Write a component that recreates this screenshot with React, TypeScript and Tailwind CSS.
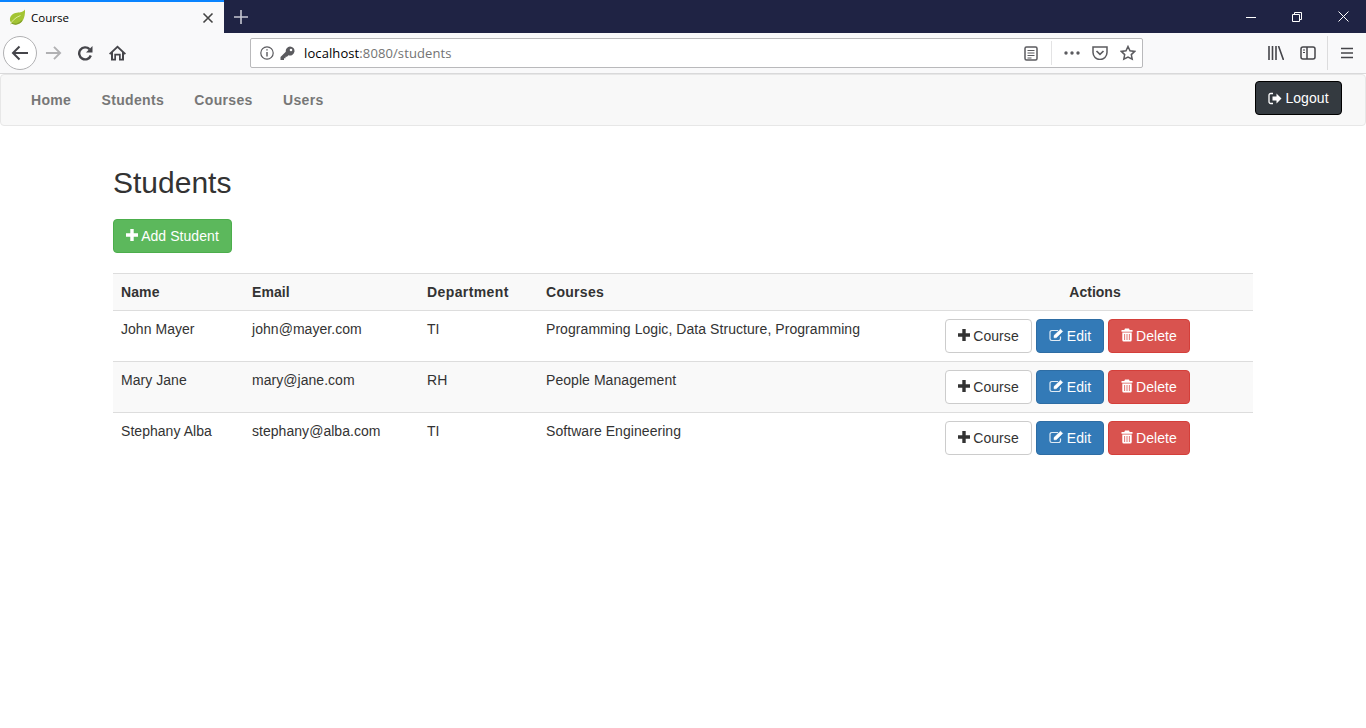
import React from "react";

const Plus = ({ c = "#333" }: { c?: string }) => (
  <svg width="12" height="12" viewBox="0 0 12 12" className="shrink-0 -translate-y-px" fill={c}>
    <path d="M4.300 0h3.400v4.300H12v3.400H7.700V12H4.300V7.700H0V4.300h4.300z" />
  </svg>
);
const EditI = () => (
  <svg width="15" height="14" viewBox="0 0 15 14" className="shrink-0 -translate-y-px" fill="none" stroke="#fff">
    <path d="M11.500 8.500v2.200a1.800 1.800 0 0 1-1.800 1.800H2.800A1.800 1.800 0 0 1 1 10.700V4.300a1.800 1.800 0 0 1 1.800-1.800H9" strokeWidth="1.200" opacity="0.85" />
    <path d="M5 9.800V7.600L11.500 1.200l2.200 2.200L7.200 9.800z" fill="#fff" strokeWidth="0.500" />
  </svg>
);
const Trash = () => (
  <svg width="12" height="14" viewBox="0 0 12 14" className="shrink-0 -translate-y-px" fill="#fff">
    <path d="M4 .5h4l.7 1.500h2.800v1.700H.5V2h2.800zM1.300 4.500h9.400V12a1.500 1.500 0 0 1-1.500 1.500H2.800A1.500 1.500 0 0 1 1.300 12zM3.300 6v6h.8V6zM5.600 6v6h.8V6zM7.900 6v6h.8V6z" fillRule="evenodd" />
  </svg>
);
const LogoutI = () => (
  <svg width="14" height="13" viewBox="0 0 14 13" className="shrink-0" fill="none">
    <path d="M5 1.500H2.800A1.800 1.800 0 0 0 1 3.300v6.400a1.800 1.800 0 0 0 1.800 1.800H5" stroke="#fff" strokeWidth="1.300" />
    <path d="M4.500 4.500h4V1.500l5 5-5 5v-3h-4z" fill="#fff" />
  </svg>
);

const base = "inline-flex items-center justify-center h-[34px] rounded border text-sm tracking-[0.06px]";

const Row = ({ name, email, dept, courses, odd }: { name: string; email: string; dept: string; courses: string; odd?: boolean }) => (
  <tr className={`border-t border-[#dddddd] ${odd ? "bg-[#f9f9f9]" : ""}`}>
    <td className="p-2 align-top leading-5 tracking-[0.04px]">{name}</td>
    <td className="p-2 align-top leading-5 tracking-[0.04px]">{email}</td>
    <td className="p-2 align-top leading-5 tracking-[0.04px]">{dept}</td>
    <td className="p-2 align-top leading-5 tracking-[0.06px]">{courses}</td>
    <td className="p-2 align-top leading-5">
      <div className="flex gap-1">
        <button className={`${base} gap-[3px] w-[87px] bg-white border-[#cccccc] text-[#333]`}><Plus />Course</button>
        <button className={`${base} gap-[3px] w-[68px] bg-[#337ab7] border-[#2e6da4] text-white`}><EditI />Edit</button>
        <button className={`${base} gap-[3px] w-[82px] bg-[#d9534f] border-[#d43f3a] text-white`}><Trash />Delete</button>
      </div>
    </td>
  </tr>
);

export default function App() {
  return (
    <div className="min-h-[728px] bg-white text-[#333] font-['Liberation_Sans',Arial,sans-serif] text-sm overflow-hidden">
      {/* tab strip */}
      <div className="h-[33px] bg-[#1f2344] flex items-stretch">
        <div className="w-[224px] bg-[#f9f9fa] border-t-2 border-[#0a84ff] flex items-center pl-[9px] pr-[10px]">
          <svg width="17" height="17" viewBox="0 0 17 17" className="shrink-0">
            <path d="M16 .5C16.500 9 13 15.500 7 15.500 4 15.500 1.500 14 1 11.500.5 7 3.500 4.500 8 3.800 11 3.300 14.500 3 16 .5z" fill="#a3c433" />
            <path d="M1.500 15.500C3 11.500 6.500 8.500 11.500 6.500" stroke="#dcea9c" strokeWidth="1" fill="none" />
            <path d="M2.500 14C5 15.500 10 16 13 11.500" stroke="#7f9c2a" strokeWidth="1.200" fill="none" />
          </svg>
          <span className="ml-[5px] text-[11.500px] text-black font-['Open_Sans',sans-serif] flex-1 pt-px">Course</span>
          <svg width="12" height="12" viewBox="0 0 12 12" stroke="#444" strokeWidth="1.600"><path d="M1.500 1.500l9 9M10.500 1.500l-9 9" /></svg>
        </div>
        <div className="w-[34px] flex items-center justify-center">
          <svg width="14" height="14" viewBox="0 0 14 14" stroke="#c6c8d2" strokeWidth="1.600"><path d="M7 0v14M0 7h14" /></svg>
        </div>
        <div className="flex-1" />
        <div className="flex items-center">
          <div className="w-[46px] flex justify-center"><svg width="10" height="10" viewBox="0 0 10 10" stroke="#fff"><path d="M0 5.500h10" /></svg></div>
          <div className="w-[46px] flex justify-center"><svg width="10" height="10" viewBox="0 0 10 10" fill="none" stroke="#fff"><path d="M.5 2.500h7v7h-7zM2.500 2.500v-2h7v7h-2" /></svg></div>
          <div className="w-[46px] flex justify-center"><svg width="11" height="11" viewBox="0 0 11 11" stroke="#fff"><path d="M.5.500l10 10M10.500.500l-10 10" /></svg></div>
        </div>
      </div>
      {/* toolbar */}
      <div className="h-[41px] bg-[#f9f9fa] border-b border-[#d9d9da] flex items-center">
        <div className="ml-[3px] w-[34px] h-[34px] rounded-full border border-[#b1b1b3] bg-white flex items-center justify-center">
          <svg width="18" height="16" viewBox="0 0 18 16" fill="none" stroke="#45454a" strokeWidth="2"><path d="M17 8H2M8.500 1.500L2 8l6.500 6.500" /></svg>
        </div>
        <div className="ml-[7px] w-[18px] flex justify-center">
          <svg width="17" height="16" viewBox="0 0 18 16" fill="none" stroke="#b1b1b3" strokeWidth="2"><path d="M1 8h15M9.500 1.500L16 8l-6.500 6.500" /></svg>
        </div>
        <div className="ml-[14px] w-[18px] flex justify-center">
          <svg width="16" height="16" viewBox="0 0 16 16" fill="none" stroke="#45454a" strokeWidth="2.400"><path d="M13.800 10.500a6 6 0 1 1-1.300-6.300" /><path d="M15.500 1v6.500H9z" fill="#45454a" stroke="none" /></svg>
        </div>
        <div className="ml-[14px] w-[18px] flex justify-center">
          <svg width="17" height="16" viewBox="0 0 17 16" fill="#45454a"><path d="M8.500.5L17 8.500l-1.300 1.300-.7-.7V15.500H10v-5H7v5H2V9.100l-.7.7L0 8.500zM8.500 3L4 7.300V13.700h1.300v-5h6.400v5H13V7.300z" fillRule="evenodd" /></svg>
        </div>
        <div className="ml-[124px] w-[893px] h-[30px] bg-white border border-[#b9b9bb] rounded-[2px] flex items-center font-['Open_Sans',sans-serif] text-[13px]">
          <svg width="14" height="14" viewBox="0 0 14 14" fill="none" stroke="#5b5b5f" className="ml-[9px] shrink-0"><circle cx="7" cy="7" r="6.200" strokeWidth="1.200" /><path d="M7 6v4.500M7 3.200v1.400" strokeWidth="1.400" /></svg>
          <svg width="15" height="15" viewBox="0 0 15 15" fill="#5b5b5f" className="ml-[6px] shrink-0"><path d="M10 .5a4.500 4.500 0 1 1-1.600 8.700L7 10.700H5.500v1.500H4V14H.5v-3L5.800 5.700A4.500 4.500 0 0 1 10 .5zm1 2.200a1.300 1.300 0 1 0 0 2.600 1.300 1.300 0 0 0 0-2.600z" fillRule="evenodd" /></svg>
          <span className="ml-[9px] flex-1 text-black pt-px tracking-[0.1px]">localhost<span className="text-[#737373]">:8080/students</span></span>
          <svg width="14" height="15" viewBox="0 0 14 15" fill="none" stroke="#5b5b5f" className="shrink-0"><rect x="1" y="1" width="12" height="13" rx="1.500" strokeWidth="1.500" /><path d="M3.500 4.500h7M3.500 7h7M3.500 9.500h7M3.500 12h4" strokeWidth="1" /></svg>
          <div className="w-px h-[24px] bg-[#e3e3e4] ml-[13px]" />
          <svg width="16" height="4" viewBox="0 0 16 4" fill="#5b5b5f" className="ml-[12px] shrink-0"><circle cx="2" cy="2" r="1.700" /><circle cx="8" cy="2" r="1.700" /><circle cx="14" cy="2" r="1.700" /></svg>
          <svg width="16" height="14" viewBox="0 0 16 14" fill="none" stroke="#5b5b5f" strokeWidth="1.500" className="ml-[12px] shrink-0"><path d="M1 1h14v5.500a7 7 0 0 1-14 0z" /><path d="M4.500 5L8 8.300 11.500 5" strokeWidth="1.700" /></svg>
          <svg width="16" height="16" viewBox="0 0 16 16" fill="none" stroke="#5b5b5f" strokeWidth="1.500" className="ml-[12px] mr-[6px] shrink-0"><path d="M8 1.500l2 4.300 4.700.6-3.400 3.200.9 4.600L8 12l-4.200 2.200.9-4.600L1.300 6.400 6 5.800z" /></svg>
        </div>
        <div className="flex-1" />
        <svg width="16" height="14" viewBox="0 0 16 14" fill="none" stroke="#45454a" strokeWidth="1.600" className="shrink-0"><path d="M1 0v14M4.500 0v14M8 0v14M10.500 0l5 14" /></svg>
        <svg width="16" height="14" viewBox="0 0 16 14" fill="none" stroke="#45454a" className="ml-[16px] shrink-0"><rect x="1" y="1" width="14" height="12" rx="2" strokeWidth="1.500" /><path d="M7 1v12" strokeWidth="1.500" /><path d="M3 4h2M3 6.500h2" /></svg>
        <div className="w-px h-[34px] bg-[#dcdcdd] ml-[11px]" />
        <svg width="12" height="12" viewBox="0 0 12 12" stroke="#45454a" strokeWidth="1.700" className="ml-[13px] mr-[13px] shrink-0"><path d="M0 1.500h12M0 6h12M0 10.500h12" /></svg>
      </div>
      {/* navbar */}
      <nav className="h-[52px] mt-0 bg-[#f8f8f8] border border-[#e7e7e7] rounded flex items-start pl-[30px] pr-[23px]">
        <ul className="flex gap-[30.300px] pt-[15px] font-bold text-[#777] text-sm leading-5 tracking-[0.33px]">
          <li>Home</li>
          <li>Students</li>
          <li>Courses</li>
          <li>Users</li>
        </ul>
        <button className={`${base} gap-[3px] ml-auto mt-[6px] w-[87px] bg-[#343a40] border-black text-white tracking-[0.2px]`}><LogoutI />Logout</button>
      </nav>
      {/* content */}
      <main className="w-[1140px] ml-[113px]">
        <h1 className="mt-[37px] text-[30px] leading-[39px] font-normal">Students</h1>
        <button className={`${base} gap-[3px] mt-[17px] w-[119px] bg-[#5cb85c] border-[#4cae4c] text-white`}><Plus c="#fff" />Add Student</button>
        <table className="mt-[20px] w-[1140px] table-fixed border-collapse">
          <colgroup>
            <col className="w-[131px]" />
            <col className="w-[175px]" />
            <col className="w-[119px]" />
            <col className="w-[399px]" />
            <col className="w-[316px]" />
          </colgroup>
          <thead>
            <tr className="bg-[#f9f9f9] border-t border-[#dddddd]">
              <th className="p-2 text-left leading-5 tracking-[0.1px]">Name</th>
              <th className="p-2 text-left leading-5 tracking-[0.1px]">Email</th>
              <th className="p-2 text-left leading-5 tracking-[0.4px]">Department</th>
              <th className="p-2 text-left leading-5 tracking-[0.3px]">Courses</th>
              <th className="p-2 text-center leading-5">Actions</th>
            </tr>
          </thead>
          <tbody>
            <Row name="John Mayer" email="john@mayer.com" dept="TI" courses="Programming Logic, Data Structure, Programming" />
            <Row name="Mary Jane" email="mary@jane.com" dept="RH" courses="People Management" odd />
            <Row name="Stephany Alba" email="stephany@alba.com" dept="TI" courses="Software Engineering" />
          </tbody>
        </table>
      </main>
    </div>
  );
}
